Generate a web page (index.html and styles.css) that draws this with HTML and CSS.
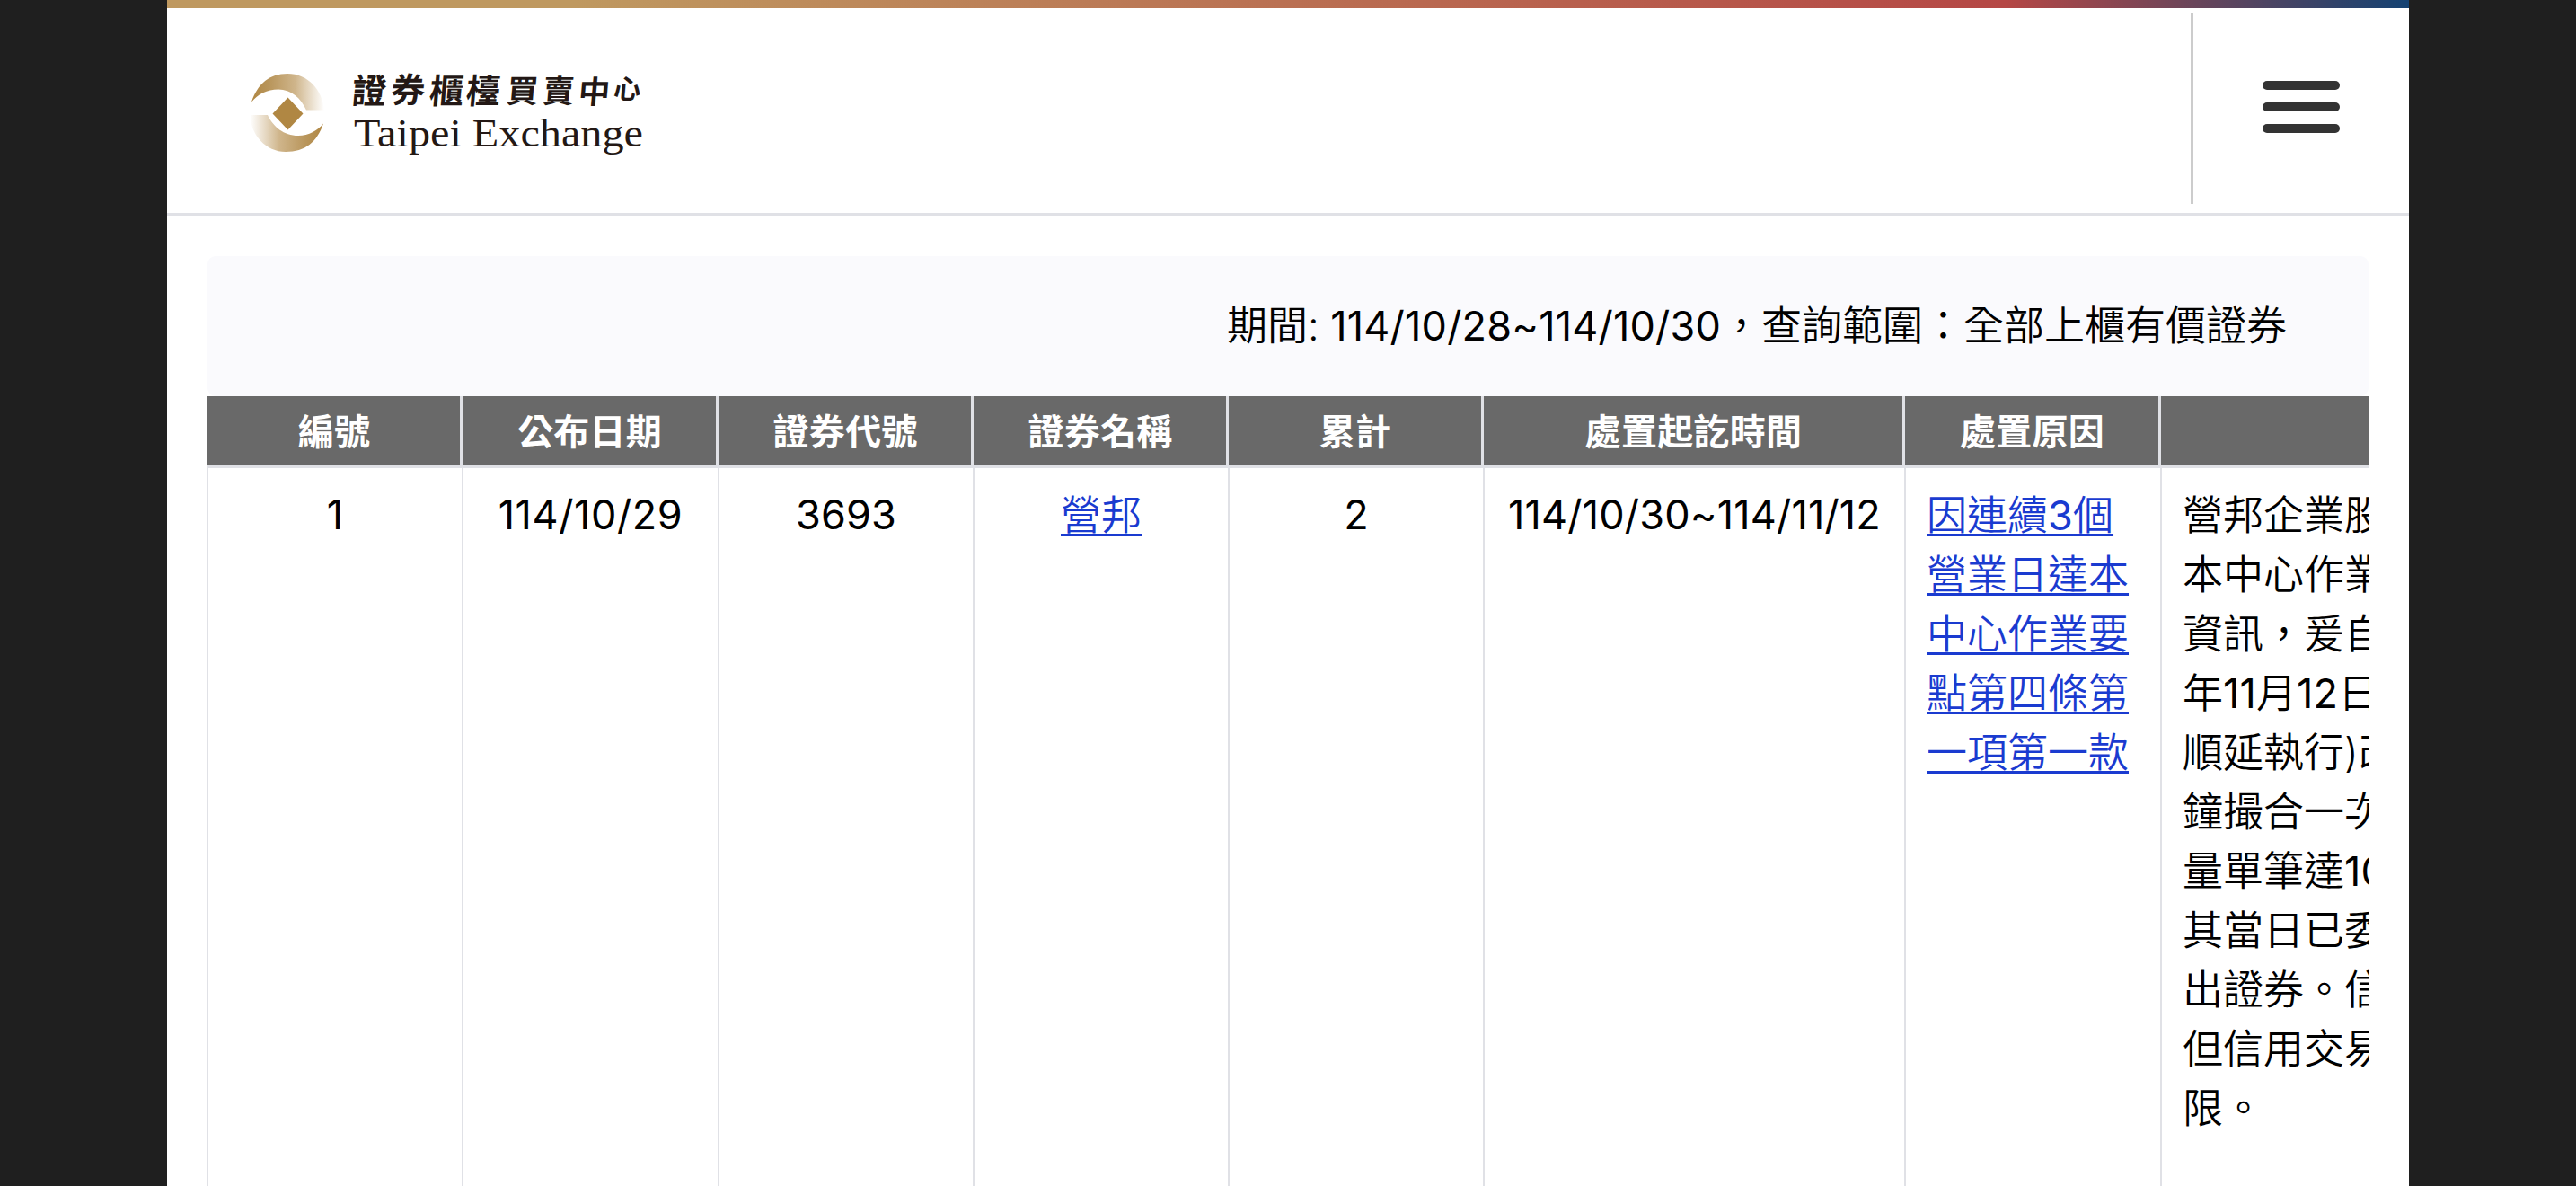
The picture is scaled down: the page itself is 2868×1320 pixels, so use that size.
FILE: index.html
```html
<!DOCTYPE html>
<html lang="zh-Hant">
<head>
<meta charset="utf-8">
<title>證券櫃檯買賣中心</title>
<link rel="stylesheet" href="styles.css">
</head>
<body>
<div class="page">
  <header class="header">
    <a class="brand">
      <svg class="logo" width="450" height="120" viewBox="0 0 450 120">
        <defs>
          <linearGradient id="top" x1="0" x2="1"><stop offset="0" stop-color="#b08743"/><stop offset=".25" stop-color="#b9965c"/><stop offset=".6" stop-color="#cfb58b"/><stop offset="1" stop-color="#fff"/></linearGradient>
          <linearGradient id="bottom" x1="1" x2="0"><stop offset="0" stop-color="#b08743"/><stop offset=".25" stop-color="#b9965c"/><stop offset=".6" stop-color="#cfb58b"/><stop offset="1" stop-color="#fff"/></linearGradient>
        </defs>
        <path fill="url(#top)" d="M2 43.500C9 23 22 12 42 12C65 12 81 30 83 52.500H63C57 39 46 29.500 32 29.500C19 29.500 9 35 2 43.500Z"/>
        <path fill="url(#bottom)" d="M82 67.500C75 88 62 99 40 99C18 99 1 80 .5 58H20C26 71 38 81 54 81C66 81 76 75 82 67.500Z"/>
        <path fill="#b08743" d="M42.500 38.500L59.500 56.500L42.500 74.500L25.500 56.500Z"/>
        <g class="logo-zh" transform="skewX(-5) translate(3 0)">
          <text x="114" y="45">證</text><text x="157" y="44">券</text><text x="200" y="45">櫃</text><text x="241" y="45">檯</text><text class="logo-narrow" x="286" y="44">買</text><text class="logo-narrow" x="326" y="44">賣</text><text class="logo-narrow" x="366" y="45">中</text><text class="logo-small" x="405" y="40">心</text>
        </g>
        <text class="logo-en" x="116" y="92.500" textLength="322" lengthAdjust="spacingAndGlyphs">Taipei Exchange</text>
      </svg>
    </a>
    <div class="menu">
      <span class="bar"></span><span class="bar"></span><span class="bar"></span>
    </div>
  </header>
  <main class="main">
    <div class="caption">期間: <span class="num">114/10/28~114/10/30</span>，查詢範圍：全部上櫃有價證券</div>
    <div class="table-wrap">
      <table class="table">
        <colgroup><col class="c1"><col class="c2"><col class="c3"><col class="c3"><col class="c3"><col class="c6"><col class="c2"><col class="c8"></colgroup>
        <thead>
          <tr><th>編號</th><th>公布日期</th><th>證券代號</th><th>證券名稱</th><th>累計</th><th>處置起訖時間</th><th>處置原因</th><th></th></tr>
        </thead>
        <tbody>
          <tr>
            <td class="num">1</td><td class="num date">114/10/29</td><td class="num">3693</td><td><a class="link">營邦</a></td><td class="num">2</td><td class="num">114/10/30~114/11/12</td>
            <td class="left"><a class="link">因連續<span class="num">3</span>個<br>營業日達本<br>中心作業要<br>點第四條第<br>一項第一款</a></td>
            <td class="left">營邦企業股<br>本中心作業<br>資訊，爰自<br>年<span class="num">11</span>月<span class="num">12</span>日<br>順延執行)改<br>鐘撮合一次<br>量單筆達<span class="num">10</span><br>其當日已委<br>出證券。信<br>但信用交易<br>限。</td>
          </tr>
        </tbody>
      </table>
    </div>
  </main>
</div>
</body>
</html>
```
FILE: styles.css
```css
* { box-sizing: border-box; }
html, body { margin: 0; height: 100%; }
body {
  background: #1f1f1f;
  overflow: hidden;
  font-family: Inter, "Noto Sans CJK TC", sans-serif;
  font-size: 45px;
  font-weight: 350;
  line-height: 66px;
  color: #000;
}
.page { width: 2496px; height: 1320px; margin-left: 186px; background: #fff; overflow: hidden; }
.header {
  height: 240px;
  display: flex;
  justify-content: space-between;
  border-bottom: 3px solid #e0e1e6;
  padding-top: 14px;
  background: linear-gradient(90deg, #bf9960 0%, #bf9960 18%, #b54745 82%, #144272 100%) top / 100% 9px no-repeat;
}
.brand { padding: 56px 0 0 92px; }
.logo { display: block; overflow: visible; }
.logo-zh { font: 700 38px "Noto Sans CJK TC", sans-serif; fill: #231815; }
.logo-narrow { font-size: 35px; }
.logo-small { font-size: 30px; }
.logo-en { font: 45px "Liberation Serif", serif; fill: #231815; }
.menu {
  width: 243px;
  height: 213px;
  border-left: 3px solid #ccc;
  padding: 76px 0 0 77px;
  display: flex;
  flex-direction: column;
  gap: 14.500px;
}
.bar { width: 86px; height: 9.500px; border-radius: 5px; background: #333; }
.main { padding: 45px 45px 0; }
.caption {
  height: 156px;
  padding: 45px 91px 0 0;
  border-radius: 9px;
  background: #fafafd;
  text-align: right;
}
.table-wrap { overflow: hidden; }
.table { table-layout: fixed; width: 2969px; border-collapse: separate; border-spacing: 0; }
.c1 { width: 284px; }
.c2 { width: 285px; }
.c3 { width: 284px; }
.c6 { width: 469px; }
.c8 { width: 794px; }
th {
  height: 80px;
  padding: 2px 0 0 1px;
  background: #696969;
  color: #fff;
  font-size: 40px;
  font-weight: 700;
  line-height: 60px;
  letter-spacing: .3px;
  border-right: 3px solid #e0e1e6;
  border-bottom: 3px solid #e0e1e6;
}
td {
  height: 900px;
  padding: 20px 0 0;
  vertical-align: top;
  text-align: center;
  white-space: nowrap;
  border: solid #e0e1e6;
  border-width: 0 1px;
}
.num { font-weight: 385; letter-spacing: .2px; }
.date { letter-spacing: .6px; }
td.num { padding-top: 19px; }
td.left { text-align: left; padding-left: 23px; }
.link { color: #1a3bd0; text-decoration: underline; text-decoration-thickness: 3px; text-underline-offset: 4px; text-decoration-skip-ink: none; }
```
